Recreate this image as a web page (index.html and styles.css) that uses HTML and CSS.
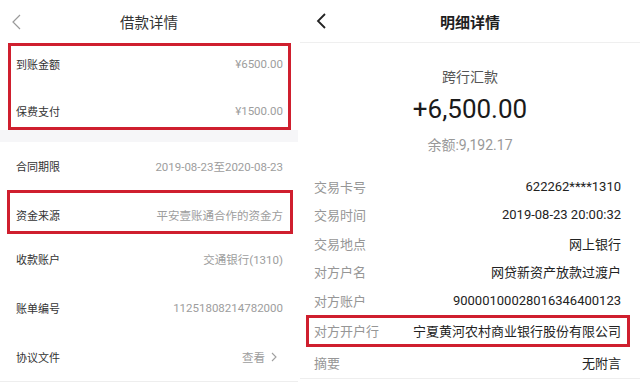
FILE: index.html
```html
<!DOCTYPE html>
<html lang="zh-CN">

<head>
    <meta charset="UTF-8">
    <meta name="viewport" content="width=device-width, initial-scale=1.0">
    <title>借款详情 / 明细详情</title>
    <link rel="stylesheet" href="styles.css">
</head>

<body>
    <div class="screens">
        <!-- 左侧：借款详情 -->
        <section class="screen loan">
            <header class="page-head">
                <svg class="back" width="20" height="20" viewBox="0 0 20 20">
                    <polyline points="14,3 7,10 14,17" fill="none" stroke="#9a9a9a" stroke-width="1.2" />
                </svg>
                <h1 class="page-title">借款详情</h1>
                <span></span>
            </header>

            <div class="mark-box amount-box">
                <div class="loan-row">
                    <span class="label">到账金额</span>
                    <span class="value">¥6500.00</span>
                </div>
                <div class="loan-row">
                    <span class="label">保费支付</span>
                    <span class="value">¥1500.00</span>
                </div>
            </div>

            <div class="band"></div>

            <div class="loan-row first">
                <span class="label">合同期限</span>
                <span class="value">2019-08-23至2020-08-23</span>
            </div>
            <div class="mark-box source-box">
                <div class="loan-row">
                    <span class="label">资金来源</span>
                    <span class="value">平安壹账通合作的资金方</span>
                </div>
            </div>
            <div class="loan-row">
                <span class="label">收款账户</span>
                <span class="value">交通银行(1310)</span>
            </div>
            <div class="loan-row">
                <span class="label">账单编号</span>
                <span class="value">11251808214782000</span>
            </div>
            <div class="loan-row last">
                <span class="label">协议文件</span>
                <span class="value link">查看
                    <svg width="10" height="10" viewBox="0 0 10 10">
                        <polyline points="3,1 7,5 3,9" fill="none" stroke="#a0a0a0" stroke-width="1.1" />
                    </svg>
                </span>
            </div>
        </section>

        <!-- 右侧：明细详情 -->
        <section class="screen detail">
            <header class="page-head bordered">
                <svg class="back" width="20" height="20" viewBox="0 0 20 20">
                    <polyline points="15,3 8,10 15,17" fill="none" stroke="#222" stroke-width="1.8" />
                </svg>
                <h1 class="page-title bold">明细详情</h1>
                <span></span>
            </header>

            <div class="summary">
                <div class="trade-type">跨行汇款</div>
                <div class="trade-amount">+6,500.00</div>
                <div class="balance">余额:9,192.17</div>
            </div>

            <div class="detail-row">
                <span class="label">交易卡号</span>
                <span class="value">622262****1310</span>
            </div>
            <div class="detail-row">
                <span class="label">交易时间</span>
                <span class="value">2019-08-23 20:00:32</span>
            </div>
            <div class="detail-row">
                <span class="label">交易地点</span>
                <span class="value">网上银行</span>
            </div>
            <div class="detail-row">
                <span class="label">对方户名</span>
                <span class="value">网贷新资产放款过渡户</span>
            </div>
            <div class="detail-row">
                <span class="label">对方账户</span>
                <span class="value">90000100028016346400123</span>
            </div>
            <div class="mark-box bank-box">
                <div class="detail-row">
                    <span class="label">对方开户行</span>
                    <span class="value">宁夏黄河农村商业银行股份有限公司</span>
                </div>
            </div>
            <div class="detail-row last">
                <span class="label">摘要</span>
                <span class="value">无附言</span>
            </div>
        </section>
    </div>
</body>

</html>
```

FILE: styles.css
```css
body {
    margin: 0;
    background-color: #fff;
    font-family: Roboto, "Noto Sans CJK SC", sans-serif;
    color: #333;
}

.screens {
    display: flex;
    gap: 2px;
    width: 640px;
    height: 382px;
    overflow: hidden;
}

.screen {
    display: flex;
    flex-direction: column;
    background-color: #fff;
}

.loan {
    width: 298px;
}

.detail {
    flex: 1;
}

.page-head {
    display: grid;
    grid-template-columns: 40px 1fr 40px;
    align-items: center;
    height: 43px;
    flex-shrink: 0;
}

.page-head.bordered {
    height: 42px;
    border-bottom: 1px solid #efefef;
}

.back {
    margin-left: 6px;
}

.detail .back {
    margin-left: 10px;
}

.page-title {
    margin: 0;
    text-align: center;
    font-size: 14.5px;
    font-weight: normal;
    color: #333;
}

.page-title.bold {
    font-size: 15px;
    font-weight: bold;
    color: #1e1e1e;
}

.mark-box {
    border: 3px solid #cf1f2e;
    box-sizing: border-box;
}

/* 借款详情 */
.loan-row {
    display: flex;
    justify-content: space-between;
    align-items: center;
    height: 49px;
    padding: 0 15px 0 16px;
    font-size: 11px;
    flex-shrink: 0;
}

.loan-row.first {
    height: 48px;
}

.loan-row.last {
    border-bottom: 1px solid #eeeeee;
}

.loan-row .label {
    color: #333;
}

.loan-row .value {
    color: #9d9d9d;
    font-size: 11.5px;
}

.amount-box {
    display: flex;
    flex-direction: column;
    gap: 17px;
    height: 87px;
    margin: 0 7px 0 8px;
    padding: 3px 0 1px;
}

.amount-box .loan-row {
    height: 30px;
    padding: 0 5px;
}

.band {
    height: 12px;
    background-color: #f6f6f8;
    flex-shrink: 0;
}

.source-box {
    height: 44px;
    margin: 0 5px 0 7px;
    padding-top: 6px;
}

.source-box .loan-row {
    height: 32px;
    padding: 0 7px 0 6px;
}

.link {
    display: flex;
    align-items: center;
    gap: 4px;
    padding-right: 4px;
}

/* 明细详情 */
.summary {
    text-align: center;
    padding: 24px 0 17px;
    flex-shrink: 0;
}

.trade-type {
    font-size: 14px;
    line-height: 20px;
    color: #555;
}

.trade-amount {
    margin-top: 6px;
    font-size: 26px;
    line-height: 32px;
    color: #1a1a1a;
}

.balance {
    margin-top: 10px;
    font-size: 14px;
    line-height: 20px;
    color: #999;
}

.detail-row {
    display: flex;
    justify-content: space-between;
    align-items: center;
    height: 28.5px;
    padding: 0 19px 0 14px;
    font-size: 13px;
    flex-shrink: 0;
}

.detail-row .label {
    color: #969696;
}

.detail-row .value {
    color: #222;
}

.detail-row.last {
    height: 31px;
    border-bottom: 1px solid #eeeeee;
}

.bank-box {
    height: 32px;
    margin: 0 10px 0 6px;
}

.bank-box .detail-row {
    height: 26px;
    padding: 0 6px 0 5px;
}
```
